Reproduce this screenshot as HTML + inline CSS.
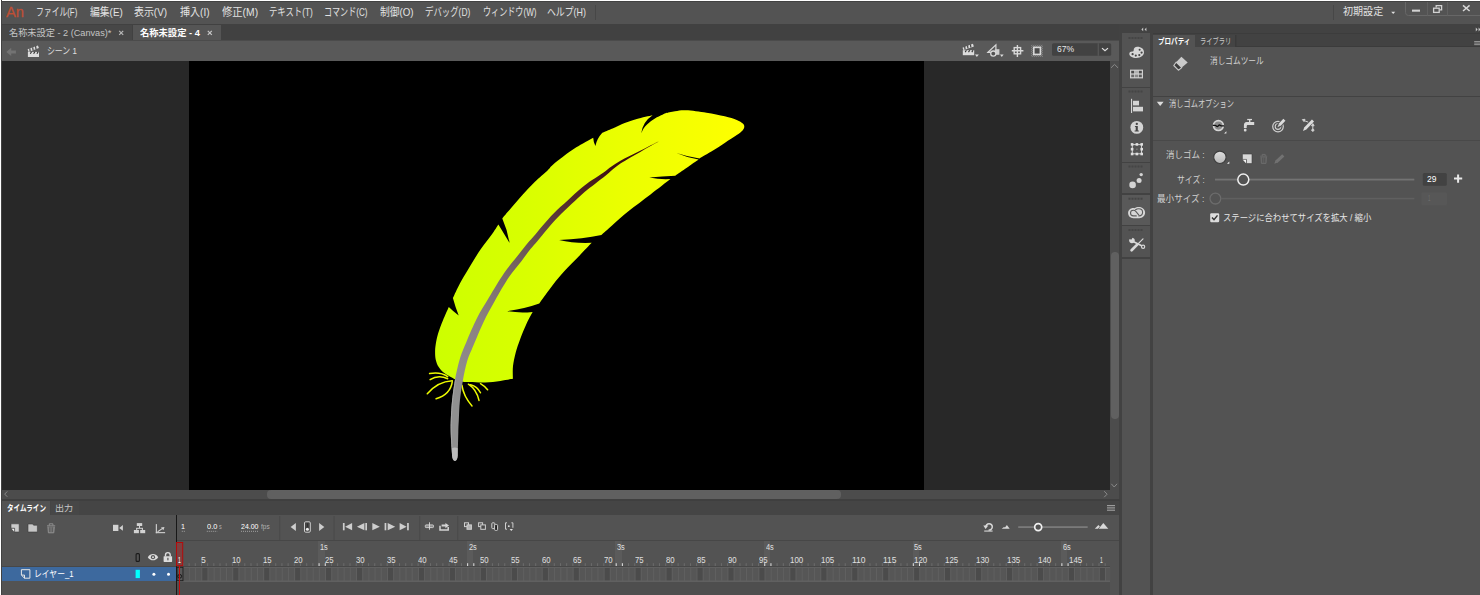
<!DOCTYPE html>
<html lang="ja">
<head>
<meta charset="utf-8">
<title>Adobe Animate</title>
<style>
html,body{margin:0;padding:0;}
body{width:1480px;height:595px;overflow:hidden;background:#535353;position:relative;
 font-family:"Liberation Sans","Noto Sans CJK JP",sans-serif;font-size:10px;color:#dcdcdc;}
.a{position:absolute;}
.t{position:absolute;white-space:pre;line-height:1;transform-origin:0 0;}
#topb{left:0;top:0;width:1480px;height:1px;background:#fff;box-shadow:0 1px 0 #424242;}
#leftb{left:0;top:0;width:1px;height:595px;background:#fff;box-shadow:1px 0 0 #424242;}
/* menu */
#menubar{left:1px;top:1px;width:1479px;height:23px;background:#535353;}
.mi{top:7px;font-size:10.5px;color:#e4e4e4;letter-spacing:-0.3px;}
/* doc tabs */
#tabbar{left:1px;top:24px;width:1119px;height:16px;background:#414141;}
#tab1{left:2px;top:25px;width:130px;height:14.7px;background:#474747;}
#tab2{left:133px;top:25px;width:88px;height:14.7px;background:#555;}
/* scene bar */
#scenebar{left:1px;top:40px;width:1119px;height:21px;background:#595959;border-top:1px solid #4b4b4b;box-sizing:border-box;}
/* stage */
#work{left:1px;top:61px;width:1109px;height:429px;background:#282828;}
#stage{left:189px;top:61px;width:735px;height:429px;background:#000;}
#vscroll{left:1110px;top:61px;width:10px;height:429px;background:#4c4c4c;}
#vthumb{left:1110.7px;top:252.2px;width:8px;height:167.3px;background:#606060;border-radius:4px;}
#hscroll{left:1px;top:490px;width:1119px;height:9px;background:#4c4c4c;}
#hthumb{left:266.9px;top:490.400px;width:573.8px;height:8.200px;background:#606060;border-radius:4.100px;}
/* right dock */
#dockgap{left:1120px;top:24px;width:360px;height:9px;background:#424242;}
#gapL{left:1119px;top:24px;width:3px;height:571px;background:#424242;}
#strip{left:1122px;top:33px;width:28px;height:562px;background:#535353;}
#gapR{left:1150px;top:33px;width:3px;height:562px;background:#424242;}
.sep{left:1122px;width:28px;height:2px;background:#424242;}
#ptabs{left:1153px;top:33px;width:327px;height:14px;background:#424242;border-top:1px solid #3c3c3c;border-bottom:0.800px solid #3b3b3b;box-sizing:border-box;}
#ptab1{left:1153px;top:34.5px;width:41.5px;height:12.5px;background:#535353;}
#ptab2{left:1195px;top:34.5px;width:39.5px;height:12.500px;background:#444;box-shadow:1.500px 0 0 #3a3a3a;}
#prop{left:1153px;top:47px;width:327px;height:548px;background:#535353;}
/* timeline */
#tlgap{left:1px;top:499px;width:1119px;height:2px;background:#3f3f3f;}
#tltabs{left:1px;top:501px;width:1118px;height:14px;background:#454545;}
#tltab1{left:1px;top:501px;width:49px;height:14px;background:#535353;}
#tltab2{left:51px;top:501px;width:28px;height:14px;background:#474747;}
#tl{left:1px;top:515px;width:1118px;height:80px;background:#535353;}
</style>
</head>
<body>
<div class="a" id="menubar"></div>
<div class="a" id="tabbar"></div><div class="a" id="tab1"></div><div class="a" id="tab2"></div>
<div class="a" id="scenebar"></div>
<div class="a" id="work"></div><div class="a" id="stage"></div>
<div class="a" id="vscroll"></div><div class="a" id="vthumb"></div>
<div class="a" id="hscroll"></div><div class="a" id="hthumb"></div>
<div class="a" id="dockgap"></div><div class="a" id="gapL"></div><div class="a" id="strip"></div><div class="a" id="gapR"></div>
<div class="a" id="ptabs"></div><div class="a" id="ptab1"></div><div class="a" id="ptab2"></div><div class="a" id="prop"></div>
<div class="a" id="tlgap"></div><div class="a" id="tltabs"></div><div class="a" id="tltab1"></div><div class="a" id="tltab2"></div><div class="a" id="tl"></div>

<svg class="a" style="left:0;top:0" width="1480" height="595" viewBox="0 0 1480 595">
<defs>
<linearGradient id="fg" gradientUnits="userSpaceOnUse" x1="430" y1="0" x2="745" y2="0"><stop offset="0" stop-color="#ccff00"/><stop offset="0.3" stop-color="#d8ff00"/><stop offset="0.6" stop-color="#eaff00"/><stop offset="1" stop-color="#ffff00"/></linearGradient>
<linearGradient id="rg" gradientUnits="userSpaceOnUse" x1="660" y1="141" x2="455" y2="400"><stop offset="0" stop-color="#380808"/><stop offset="0.15" stop-color="#3e1014"/><stop offset="0.29" stop-color="#4f2626"/><stop offset="0.42" stop-color="#5f4242"/><stop offset="0.5" stop-color="#6b5555"/><stop offset="0.61" stop-color="#7a6a6a"/><stop offset="0.76" stop-color="#8a8080"/><stop offset="0.9" stop-color="#8e8a8a"/><stop offset="1" stop-color="#909090"/></linearGradient>
</defs>
<g fill="none" stroke="#eefc00" stroke-width="1.5" stroke-linecap="round"><path d="M447.7,376.6Q440.2,371.5 429.6,373.6"/><path d="M447.7,378.7Q438.2,374.5 430.1,379.7"/><path d="M452.3,380.7Q437.5,381.5 427.3,393.8"/><path d="M452.3,381.7Q450.5,394.5 436.1,398.8"/><path d="M461.9,385.2Q463.5,396.5 472,405.9"/><path d="M468.4,384.2Q476.5,389.5 479,400.4"/><path d="M470.5,384.7Q477.5,386.5 480.5,392.8"/><path d="M480.5,383.7Q484.5,386 487.6,389.8"/></g>
<path d="M454.8,379.2C453.0,378.2 446.9,375.1 444.2,373.1C441.5,371.1 440.1,369.3 438.7,367.1C437.3,364.9 436.4,362.5 435.8,360.0C435.2,357.5 435.1,354.6 435.1,352.0C435.1,349.4 435.2,347.5 435.7,344.4C436.2,341.3 436.9,337.5 438.1,333.5C439.3,329.5 441.2,324.6 443.0,320.2C444.8,315.8 447.8,309.1 448.8,306.9Q452.5,310.5 458.7,315.6Q455.5,307.5 452.9,297.9C454.1,295.5 457.3,288.2 459.9,283.4C462.5,278.6 465.0,274.5 468.4,268.9C471.8,263.2 476.7,255.2 480.5,249.5C484.3,243.8 488.4,239.2 491.4,235.0C494.4,230.8 497.2,226.2 498.4,224.4Q503.0,232.0 509.6,242.9Q507.5,230.0 502.3,218.4C503.7,216.8 507.1,212.6 510.5,208.7C513.9,204.8 518.6,199.2 522.6,194.8C526.6,190.4 530.5,186.2 534.7,182.1C538.9,178.0 545.1,172.8 548.0,170.0C550.9,167.2 549.4,167.9 552.1,165.5C554.8,163.1 560.2,158.8 564.2,155.8C568.2,152.8 571.5,150.3 576.3,147.3C581.1,144.3 590.4,139.3 593.2,137.7Q593.5,142.5 595.4,145.9Q597.0,138.5 602.3,132.8C604.0,132.1 608.9,130.2 612.6,128.6C616.3,127.0 620.7,124.7 624.7,123.1C628.7,121.5 632.1,120.2 636.8,118.9C641.4,117.6 650.0,115.8 652.6,115.2Q642.6,121.8 641.2,133.5C641.6,132.7 642.6,130.2 643.6,128.6C644.6,127.0 645.3,126.0 647.3,124.2C649.3,122.5 652.7,119.9 655.7,118.1C658.7,116.3 663.9,114.1 665.5,113.3C667.1,113.0 671.6,111.8 675.0,111.3C678.4,110.8 680.8,110.1 686.0,110.3C691.2,110.5 700.0,111.7 706.5,112.7C713.0,113.7 719.7,115.1 724.7,116.3C729.8,117.5 733.8,118.8 736.8,120.0C739.8,121.2 741.5,122.5 742.8,123.6C744.0,124.7 744.3,125.5 744.3,126.6C744.3,127.7 744.0,128.8 742.8,130.2C741.5,131.6 739.8,133.0 736.8,135.1C733.8,137.2 728.7,140.3 724.7,142.9C720.7,145.5 716.8,148.2 712.6,150.8C708.4,153.4 701.7,157.1 699.5,158.4Q687.0,156.6 676.4,153.0Q687.0,157.6 698.6,159.6C696.6,161.0 690.7,165.1 686.8,167.8C682.9,170.5 677.2,174.4 675.3,175.7Q662.0,176.4 649.3,177.5Q660.0,179.6 670.4,179.0C667.1,181.6 657.5,189.1 650.5,194.4C643.5,199.7 635.1,205.9 628.7,211.0C622.3,216.1 616.8,221.2 612.3,225.2C607.8,229.2 603.2,233.3 601.4,234.9Q583.0,238.6 559.0,240.0Q574.0,243.6 591.7,242.8C589.5,245.1 582.9,252.0 578.4,256.7C573.9,261.3 569.0,265.9 564.7,270.7C560.4,275.4 556.8,279.8 552.6,285.2C548.4,290.6 541.5,300.4 539.3,303.4Q526.0,308.2 507.2,311.2Q520.0,313.3 532.6,311.9C531.6,313.9 528.4,319.5 526.4,323.9C524.4,328.3 522.2,333.6 520.4,338.4C518.6,343.2 516.8,348.3 515.6,352.9C514.4,357.5 513.5,361.7 513.0,366.0C512.5,370.3 512.9,376.7 512.9,378.8C510.8,379.1 504.9,380.3 500.3,380.9C495.7,381.5 490.2,382.2 485.1,382.4C480.1,382.6 473.7,382.0 470.0,381.9C466.3,381.8 465.4,382.1 462.9,381.7C460.4,381.2 456.1,379.6 454.8,379.2Z" fill="url(#fg)"/>
<path d="M660.6,140.4C658.8,141.3 653.3,144.0 649.9,145.7C646.4,147.5 643.1,149.2 639.7,150.9C636.4,152.6 633.0,154.2 629.6,156.0C626.2,157.7 622.6,159.5 619.6,161.3C616.5,163.1 613.7,164.9 611.1,166.8C608.4,168.6 606.7,170.3 603.6,172.5C600.4,174.7 595.8,177.6 592.1,180.1C588.4,182.7 585.4,184.7 581.4,188.1C577.3,191.4 572.4,196.0 567.9,200.2C563.3,204.3 558.2,208.8 554.1,213.0C549.9,217.2 546.5,221.2 543.0,225.2C539.5,229.2 535.9,233.8 533.1,237.1C530.2,240.4 528.6,241.9 525.9,245.2C523.1,248.5 520.3,252.4 516.6,257.1C513.0,261.8 508.5,266.5 504.0,273.2C499.4,279.9 493.6,289.8 489.1,297.3C484.6,304.8 480.7,310.8 476.9,318.3C473.1,325.8 469.0,335.7 466.2,342.5C463.3,349.2 461.7,352.7 459.8,358.9C458.0,365.1 456.3,372.6 455.0,379.5C453.7,386.3 452.8,393.3 452.1,400.0C451.4,406.7 451.0,414.5 450.8,419.8C450.6,425.1 450.6,427.3 450.7,432.0C450.8,436.6 451.3,443.9 451.5,447.8C451.7,451.6 452.0,453.9 452.1,455.1C452.1,463.1 457.7,462.9 457.7,454.9C457.7,453.7 457.8,451.5 457.9,447.6C458.0,443.8 458.2,436.6 458.3,432.0C458.4,427.4 458.5,425.4 458.8,420.2C459.1,415.0 459.2,407.3 459.9,400.8C460.5,394.3 461.6,387.5 462.8,380.9C464.0,374.3 465.4,367.0 467.2,361.1C469.0,355.2 470.7,352.1 473.4,345.5C476.2,339.0 480.1,329.2 483.7,321.7C487.3,314.2 490.6,308.2 494.9,300.7C499.1,293.2 504.8,283.4 509.2,276.8C513.7,270.2 518.0,265.5 521.6,260.9C525.1,256.3 527.9,252.3 530.5,249.0C533.2,245.7 534.7,244.2 537.5,240.9C540.4,237.6 544.0,233.0 547.4,229.0C550.8,225.0 554.1,221.2 558.1,217.0C562.2,212.8 567.1,208.2 571.5,204.0C575.9,199.9 580.8,195.3 584.6,191.9C588.5,188.6 591.3,186.6 594.9,183.9C598.4,181.1 602.8,178.0 605.8,175.5C608.9,173.1 610.4,171.3 612.9,169.2C615.4,167.2 617.9,165.3 620.8,163.3C623.8,161.4 627.2,159.3 630.4,157.4C633.6,155.5 637.0,153.7 640.3,151.9C643.5,150.0 646.7,148.1 650.1,146.3C653.5,144.4 658.9,141.5 660.6,140.6Z" fill="url(#rg)"/>
<path d="M455.5,379.6C455.0,383.0 453.3,393.3 452.6,400.1C451.9,406.8 451.5,414.5 451.3,419.8C451.1,425.2 451.1,427.3 451.2,432.0C451.3,436.6 451.8,443.9 452.0,447.7C452.2,451.6 452.5,453.8 452.6,455.1" fill="none" stroke="#a8a8a8" stroke-width="0.9"/>
<path d="M452,448.3 c1.5,-1 4,-1 5.7,0 v7 c-0.3,7.6 -5.2,7.6 -5.7,0z" fill="#bcbcbc"/>
</svg>
<div class="a" style="left:1122.00px;top:194.60px;width:28.00px;height:30.20px;background:#595959;"></div>
<div class="a" style="left:1122.00px;top:86.80px;width:28.00px;height:1.30px;background:#424242;"></div>
<div class="a" style="left:1122.00px;top:161.50px;width:28.00px;height:1.50px;background:#424242;"></div>
<div class="a" style="left:1122.00px;top:192.60px;width:28.00px;height:2.00px;background:#424242;"></div>
<div class="a" style="left:1122.00px;top:224.80px;width:28.00px;height:1.70px;background:#424242;"></div>
<div class="a" style="left:1122.00px;top:257.40px;width:28.00px;height:1.60px;background:#424242;"></div>
<div class="a" style="left:1153.00px;top:95.50px;width:327.00px;height:1.50px;background:#424242;"></div>
<div class="a" style="left:1153.00px;top:139.60px;width:327.00px;height:1.00px;background:#494949;"></div>
<div class="a" style="left:177.00px;top:540.00px;width:942.00px;height:1.00px;background:#474747;"></div>
<div class="a" style="left:1.00px;top:566.00px;width:1109.00px;height:1.00px;background:#474747;"></div>
<div class="a" style="left:318.37px;top:541.00px;width:6.19px;height:25.00px;background:#5b5b5b;"></div>
<div class="a" style="left:466.93px;top:541.00px;width:6.19px;height:25.00px;background:#5b5b5b;"></div>
<div class="a" style="left:615.49px;top:541.00px;width:6.19px;height:25.00px;background:#5b5b5b;"></div>
<div class="a" style="left:764.05px;top:541.00px;width:6.19px;height:25.00px;background:#5b5b5b;"></div>
<div class="a" style="left:912.61px;top:541.00px;width:6.19px;height:25.00px;background:#5b5b5b;"></div>
<div class="a" style="left:1061.17px;top:541.00px;width:6.19px;height:25.00px;background:#5b5b5b;"></div>
<svg class="a" style="left:0;top:0" width="1480" height="595" viewBox="0 0 1480 595"><rect x="177" y="582" width="933" height="13" fill="#4e4e4e"/><rect x="177" y="567" width="933" height="15" fill="#606060"/><rect x="177.50" y="568" width="5.19" height="12.400" fill="#565656"/><rect x="183.69" y="568" width="5.19" height="12.400" fill="#565656"/><rect x="189.88" y="568" width="5.19" height="12.400" fill="#565656"/><rect x="196.07" y="568" width="5.19" height="12.400" fill="#565656"/><rect x="202.26" y="568" width="5.19" height="12.400" fill="#4b4b4b"/><rect x="208.45" y="568" width="5.19" height="12.400" fill="#565656"/><rect x="214.64" y="568" width="5.19" height="12.400" fill="#565656"/><rect x="220.83" y="568" width="5.19" height="12.400" fill="#565656"/><rect x="227.02" y="568" width="5.19" height="12.400" fill="#565656"/><rect x="233.21" y="568" width="5.19" height="12.400" fill="#4b4b4b"/><rect x="239.40" y="568" width="5.19" height="12.400" fill="#565656"/><rect x="245.59" y="568" width="5.19" height="12.400" fill="#565656"/><rect x="251.78" y="568" width="5.19" height="12.400" fill="#565656"/><rect x="257.97" y="568" width="5.19" height="12.400" fill="#565656"/><rect x="264.16" y="568" width="5.19" height="12.400" fill="#4b4b4b"/><rect x="270.35" y="568" width="5.19" height="12.400" fill="#565656"/><rect x="276.54" y="568" width="5.19" height="12.400" fill="#565656"/><rect x="282.73" y="568" width="5.19" height="12.400" fill="#565656"/><rect x="288.92" y="568" width="5.19" height="12.400" fill="#565656"/><rect x="295.11" y="568" width="5.19" height="12.400" fill="#4b4b4b"/><rect x="301.30" y="568" width="5.19" height="12.400" fill="#565656"/><rect x="307.49" y="568" width="5.19" height="12.400" fill="#565656"/><rect x="313.68" y="568" width="5.19" height="12.400" fill="#565656"/><rect x="319.87" y="568" width="5.19" height="12.400" fill="#565656"/><rect x="326.06" y="568" width="5.19" height="12.400" fill="#4b4b4b"/><rect x="332.25" y="568" width="5.19" height="12.400" fill="#565656"/><rect x="338.44" y="568" width="5.19" height="12.400" fill="#565656"/><rect x="344.63" y="568" width="5.19" height="12.400" fill="#565656"/><rect x="350.82" y="568" width="5.19" height="12.400" fill="#565656"/><rect x="357.01" y="568" width="5.19" height="12.400" fill="#4b4b4b"/><rect x="363.20" y="568" width="5.19" height="12.400" fill="#565656"/><rect x="369.39" y="568" width="5.19" height="12.400" fill="#565656"/><rect x="375.58" y="568" width="5.19" height="12.400" fill="#565656"/><rect x="381.77" y="568" width="5.19" height="12.400" fill="#565656"/><rect x="387.96" y="568" width="5.19" height="12.400" fill="#4b4b4b"/><rect x="394.15" y="568" width="5.19" height="12.400" fill="#565656"/><rect x="400.34" y="568" width="5.19" height="12.400" fill="#565656"/><rect x="406.53" y="568" width="5.19" height="12.400" fill="#565656"/><rect x="412.72" y="568" width="5.19" height="12.400" fill="#565656"/><rect x="418.91" y="568" width="5.19" height="12.400" fill="#4b4b4b"/><rect x="425.10" y="568" width="5.19" height="12.400" fill="#565656"/><rect x="431.29" y="568" width="5.19" height="12.400" fill="#565656"/><rect x="437.48" y="568" width="5.19" height="12.400" fill="#565656"/><rect x="443.67" y="568" width="5.19" height="12.400" fill="#565656"/><rect x="449.86" y="568" width="5.19" height="12.400" fill="#4b4b4b"/><rect x="456.05" y="568" width="5.19" height="12.400" fill="#565656"/><rect x="462.24" y="568" width="5.19" height="12.400" fill="#565656"/><rect x="468.43" y="568" width="5.19" height="12.400" fill="#565656"/><rect x="474.62" y="568" width="5.19" height="12.400" fill="#565656"/><rect x="480.81" y="568" width="5.19" height="12.400" fill="#4b4b4b"/><rect x="487.00" y="568" width="5.19" height="12.400" fill="#565656"/><rect x="493.19" y="568" width="5.19" height="12.400" fill="#565656"/><rect x="499.38" y="568" width="5.19" height="12.400" fill="#565656"/><rect x="505.57" y="568" width="5.19" height="12.400" fill="#565656"/><rect x="511.76" y="568" width="5.19" height="12.400" fill="#4b4b4b"/><rect x="517.95" y="568" width="5.19" height="12.400" fill="#565656"/><rect x="524.14" y="568" width="5.19" height="12.400" fill="#565656"/><rect x="530.33" y="568" width="5.19" height="12.400" fill="#565656"/><rect x="536.52" y="568" width="5.19" height="12.400" fill="#565656"/><rect x="542.71" y="568" width="5.19" height="12.400" fill="#4b4b4b"/><rect x="548.90" y="568" width="5.19" height="12.400" fill="#565656"/><rect x="555.09" y="568" width="5.19" height="12.400" fill="#565656"/><rect x="561.28" y="568" width="5.19" height="12.400" fill="#565656"/><rect x="567.47" y="568" width="5.19" height="12.400" fill="#565656"/><rect x="573.66" y="568" width="5.19" height="12.400" fill="#4b4b4b"/><rect x="579.85" y="568" width="5.19" height="12.400" fill="#565656"/><rect x="586.04" y="568" width="5.19" height="12.400" fill="#565656"/><rect x="592.23" y="568" width="5.19" height="12.400" fill="#565656"/><rect x="598.42" y="568" width="5.19" height="12.400" fill="#565656"/><rect x="604.61" y="568" width="5.19" height="12.400" fill="#4b4b4b"/><rect x="610.80" y="568" width="5.19" height="12.400" fill="#565656"/><rect x="616.99" y="568" width="5.19" height="12.400" fill="#565656"/><rect x="623.18" y="568" width="5.19" height="12.400" fill="#565656"/><rect x="629.37" y="568" width="5.19" height="12.400" fill="#565656"/><rect x="635.56" y="568" width="5.19" height="12.400" fill="#4b4b4b"/><rect x="641.75" y="568" width="5.19" height="12.400" fill="#565656"/><rect x="647.94" y="568" width="5.19" height="12.400" fill="#565656"/><rect x="654.13" y="568" width="5.19" height="12.400" fill="#565656"/><rect x="660.32" y="568" width="5.19" height="12.400" fill="#565656"/><rect x="666.51" y="568" width="5.19" height="12.400" fill="#4b4b4b"/><rect x="672.70" y="568" width="5.19" height="12.400" fill="#565656"/><rect x="678.89" y="568" width="5.19" height="12.400" fill="#565656"/><rect x="685.08" y="568" width="5.19" height="12.400" fill="#565656"/><rect x="691.27" y="568" width="5.19" height="12.400" fill="#565656"/><rect x="697.46" y="568" width="5.19" height="12.400" fill="#4b4b4b"/><rect x="703.65" y="568" width="5.19" height="12.400" fill="#565656"/><rect x="709.84" y="568" width="5.19" height="12.400" fill="#565656"/><rect x="716.03" y="568" width="5.19" height="12.400" fill="#565656"/><rect x="722.22" y="568" width="5.19" height="12.400" fill="#565656"/><rect x="728.41" y="568" width="5.19" height="12.400" fill="#4b4b4b"/><rect x="734.60" y="568" width="5.19" height="12.400" fill="#565656"/><rect x="740.79" y="568" width="5.19" height="12.400" fill="#565656"/><rect x="746.98" y="568" width="5.19" height="12.400" fill="#565656"/><rect x="753.17" y="568" width="5.19" height="12.400" fill="#565656"/><rect x="759.36" y="568" width="5.19" height="12.400" fill="#4b4b4b"/><rect x="765.55" y="568" width="5.19" height="12.400" fill="#565656"/><rect x="771.74" y="568" width="5.19" height="12.400" fill="#565656"/><rect x="777.93" y="568" width="5.19" height="12.400" fill="#565656"/><rect x="784.12" y="568" width="5.19" height="12.400" fill="#565656"/><rect x="790.31" y="568" width="5.19" height="12.400" fill="#4b4b4b"/><rect x="796.50" y="568" width="5.19" height="12.400" fill="#565656"/><rect x="802.69" y="568" width="5.19" height="12.400" fill="#565656"/><rect x="808.88" y="568" width="5.19" height="12.400" fill="#565656"/><rect x="815.07" y="568" width="5.19" height="12.400" fill="#565656"/><rect x="821.26" y="568" width="5.19" height="12.400" fill="#4b4b4b"/><rect x="827.45" y="568" width="5.19" height="12.400" fill="#565656"/><rect x="833.64" y="568" width="5.19" height="12.400" fill="#565656"/><rect x="839.83" y="568" width="5.19" height="12.400" fill="#565656"/><rect x="846.02" y="568" width="5.19" height="12.400" fill="#565656"/><rect x="852.21" y="568" width="5.19" height="12.400" fill="#4b4b4b"/><rect x="858.40" y="568" width="5.19" height="12.400" fill="#565656"/><rect x="864.59" y="568" width="5.19" height="12.400" fill="#565656"/><rect x="870.78" y="568" width="5.19" height="12.400" fill="#565656"/><rect x="876.97" y="568" width="5.19" height="12.400" fill="#565656"/><rect x="883.16" y="568" width="5.19" height="12.400" fill="#4b4b4b"/><rect x="889.35" y="568" width="5.19" height="12.400" fill="#565656"/><rect x="895.54" y="568" width="5.19" height="12.400" fill="#565656"/><rect x="901.73" y="568" width="5.19" height="12.400" fill="#565656"/><rect x="907.92" y="568" width="5.19" height="12.400" fill="#565656"/><rect x="914.11" y="568" width="5.19" height="12.400" fill="#4b4b4b"/><rect x="920.30" y="568" width="5.19" height="12.400" fill="#565656"/><rect x="926.49" y="568" width="5.19" height="12.400" fill="#565656"/><rect x="932.68" y="568" width="5.19" height="12.400" fill="#565656"/><rect x="938.87" y="568" width="5.19" height="12.400" fill="#565656"/><rect x="945.06" y="568" width="5.19" height="12.400" fill="#4b4b4b"/><rect x="951.25" y="568" width="5.19" height="12.400" fill="#565656"/><rect x="957.44" y="568" width="5.19" height="12.400" fill="#565656"/><rect x="963.63" y="568" width="5.19" height="12.400" fill="#565656"/><rect x="969.82" y="568" width="5.19" height="12.400" fill="#565656"/><rect x="976.01" y="568" width="5.19" height="12.400" fill="#4b4b4b"/><rect x="982.20" y="568" width="5.19" height="12.400" fill="#565656"/><rect x="988.39" y="568" width="5.19" height="12.400" fill="#565656"/><rect x="994.58" y="568" width="5.19" height="12.400" fill="#565656"/><rect x="1000.77" y="568" width="5.19" height="12.400" fill="#565656"/><rect x="1006.96" y="568" width="5.19" height="12.400" fill="#4b4b4b"/><rect x="1013.15" y="568" width="5.19" height="12.400" fill="#565656"/><rect x="1019.34" y="568" width="5.19" height="12.400" fill="#565656"/><rect x="1025.53" y="568" width="5.19" height="12.400" fill="#565656"/><rect x="1031.72" y="568" width="5.19" height="12.400" fill="#565656"/><rect x="1037.91" y="568" width="5.19" height="12.400" fill="#4b4b4b"/><rect x="1044.10" y="568" width="5.19" height="12.400" fill="#565656"/><rect x="1050.29" y="568" width="5.19" height="12.400" fill="#565656"/><rect x="1056.48" y="568" width="5.19" height="12.400" fill="#565656"/><rect x="1062.67" y="568" width="5.19" height="12.400" fill="#565656"/><rect x="1068.86" y="568" width="5.19" height="12.400" fill="#4b4b4b"/><rect x="1075.05" y="568" width="5.19" height="12.400" fill="#565656"/><rect x="1081.24" y="568" width="5.19" height="12.400" fill="#565656"/><rect x="1087.43" y="568" width="5.19" height="12.400" fill="#565656"/><rect x="1093.62" y="568" width="5.19" height="12.400" fill="#565656"/><rect x="1099.81" y="568" width="5.19" height="12.400" fill="#4b4b4b"/><rect x="1106.00" y="568" width="4.50" height="12.400" fill="#565656"/><rect x="182.39" y="563.2" width="1" height="2.8" fill="#6c6c6c"/><rect x="188.58" y="563.2" width="1" height="2.8" fill="#6c6c6c"/><rect x="194.77" y="563.2" width="1" height="2.8" fill="#6c6c6c"/><rect x="200.96" y="563.2" width="1" height="2.8" fill="#6c6c6c"/><rect x="207.15" y="563.2" width="1" height="2.8" fill="#6c6c6c"/><rect x="213.34" y="563.2" width="1" height="2.8" fill="#6c6c6c"/><rect x="219.53" y="563.2" width="1" height="2.8" fill="#6c6c6c"/><rect x="225.72" y="563.2" width="1" height="2.8" fill="#6c6c6c"/><rect x="231.91" y="563.2" width="1" height="2.8" fill="#6c6c6c"/><rect x="238.10" y="563.2" width="1" height="2.8" fill="#6c6c6c"/><rect x="244.29" y="563.2" width="1" height="2.8" fill="#6c6c6c"/><rect x="250.48" y="563.2" width="1" height="2.8" fill="#6c6c6c"/><rect x="256.67" y="563.2" width="1" height="2.8" fill="#6c6c6c"/><rect x="262.86" y="563.2" width="1" height="2.8" fill="#6c6c6c"/><rect x="269.05" y="563.2" width="1" height="2.8" fill="#6c6c6c"/><rect x="275.24" y="563.2" width="1" height="2.8" fill="#6c6c6c"/><rect x="281.43" y="563.2" width="1" height="2.8" fill="#6c6c6c"/><rect x="287.62" y="563.2" width="1" height="2.8" fill="#6c6c6c"/><rect x="293.81" y="563.2" width="1" height="2.8" fill="#6c6c6c"/><rect x="300.00" y="563.2" width="1" height="2.8" fill="#6c6c6c"/><rect x="306.19" y="563.2" width="1" height="2.8" fill="#6c6c6c"/><rect x="312.38" y="563.2" width="1" height="2.8" fill="#6c6c6c"/><rect x="318.57" y="563.2" width="1" height="2.8" fill="#e4e4e4"/><rect x="324.76" y="563.2" width="1" height="2.8" fill="#e4e4e4"/><rect x="330.95" y="563.2" width="1" height="2.8" fill="#6c6c6c"/><rect x="337.14" y="563.2" width="1" height="2.8" fill="#6c6c6c"/><rect x="343.33" y="563.2" width="1" height="2.8" fill="#6c6c6c"/><rect x="349.52" y="563.2" width="1" height="2.8" fill="#6c6c6c"/><rect x="355.71" y="563.2" width="1" height="2.8" fill="#6c6c6c"/><rect x="361.90" y="563.2" width="1" height="2.8" fill="#6c6c6c"/><rect x="368.09" y="563.2" width="1" height="2.8" fill="#6c6c6c"/><rect x="374.28" y="563.2" width="1" height="2.8" fill="#6c6c6c"/><rect x="380.47" y="563.2" width="1" height="2.8" fill="#6c6c6c"/><rect x="386.66" y="563.2" width="1" height="2.8" fill="#6c6c6c"/><rect x="392.85" y="563.2" width="1" height="2.8" fill="#6c6c6c"/><rect x="399.04" y="563.2" width="1" height="2.8" fill="#6c6c6c"/><rect x="405.23" y="563.2" width="1" height="2.8" fill="#6c6c6c"/><rect x="411.42" y="563.2" width="1" height="2.8" fill="#6c6c6c"/><rect x="417.61" y="563.2" width="1" height="2.8" fill="#6c6c6c"/><rect x="423.80" y="563.2" width="1" height="2.8" fill="#6c6c6c"/><rect x="429.99" y="563.2" width="1" height="2.8" fill="#6c6c6c"/><rect x="436.18" y="563.2" width="1" height="2.8" fill="#6c6c6c"/><rect x="442.37" y="563.2" width="1" height="2.8" fill="#6c6c6c"/><rect x="448.56" y="563.2" width="1" height="2.8" fill="#6c6c6c"/><rect x="454.75" y="563.2" width="1" height="2.8" fill="#6c6c6c"/><rect x="460.94" y="563.2" width="1" height="2.8" fill="#6c6c6c"/><rect x="467.13" y="563.2" width="1" height="2.8" fill="#e4e4e4"/><rect x="473.32" y="563.2" width="1" height="2.8" fill="#e4e4e4"/><rect x="479.51" y="563.2" width="1" height="2.8" fill="#6c6c6c"/><rect x="485.70" y="563.2" width="1" height="2.8" fill="#6c6c6c"/><rect x="491.89" y="563.2" width="1" height="2.8" fill="#6c6c6c"/><rect x="498.08" y="563.2" width="1" height="2.8" fill="#6c6c6c"/><rect x="504.27" y="563.2" width="1" height="2.8" fill="#6c6c6c"/><rect x="510.46" y="563.2" width="1" height="2.8" fill="#6c6c6c"/><rect x="516.65" y="563.2" width="1" height="2.8" fill="#6c6c6c"/><rect x="522.84" y="563.2" width="1" height="2.8" fill="#6c6c6c"/><rect x="529.03" y="563.2" width="1" height="2.8" fill="#6c6c6c"/><rect x="535.22" y="563.2" width="1" height="2.8" fill="#6c6c6c"/><rect x="541.41" y="563.2" width="1" height="2.8" fill="#6c6c6c"/><rect x="547.60" y="563.2" width="1" height="2.8" fill="#6c6c6c"/><rect x="553.79" y="563.2" width="1" height="2.8" fill="#6c6c6c"/><rect x="559.98" y="563.2" width="1" height="2.8" fill="#6c6c6c"/><rect x="566.17" y="563.2" width="1" height="2.8" fill="#6c6c6c"/><rect x="572.36" y="563.2" width="1" height="2.8" fill="#6c6c6c"/><rect x="578.55" y="563.2" width="1" height="2.8" fill="#6c6c6c"/><rect x="584.74" y="563.2" width="1" height="2.8" fill="#6c6c6c"/><rect x="590.93" y="563.2" width="1" height="2.8" fill="#6c6c6c"/><rect x="597.12" y="563.2" width="1" height="2.8" fill="#6c6c6c"/><rect x="603.31" y="563.2" width="1" height="2.8" fill="#6c6c6c"/><rect x="609.50" y="563.2" width="1" height="2.8" fill="#6c6c6c"/><rect x="615.69" y="563.2" width="1" height="2.8" fill="#e4e4e4"/><rect x="621.88" y="563.2" width="1" height="2.8" fill="#e4e4e4"/><rect x="628.07" y="563.2" width="1" height="2.8" fill="#6c6c6c"/><rect x="634.26" y="563.2" width="1" height="2.8" fill="#6c6c6c"/><rect x="640.45" y="563.2" width="1" height="2.8" fill="#6c6c6c"/><rect x="646.64" y="563.2" width="1" height="2.8" fill="#6c6c6c"/><rect x="652.83" y="563.2" width="1" height="2.8" fill="#6c6c6c"/><rect x="659.02" y="563.2" width="1" height="2.8" fill="#6c6c6c"/><rect x="665.21" y="563.2" width="1" height="2.8" fill="#6c6c6c"/><rect x="671.40" y="563.2" width="1" height="2.8" fill="#6c6c6c"/><rect x="677.59" y="563.2" width="1" height="2.8" fill="#6c6c6c"/><rect x="683.78" y="563.2" width="1" height="2.8" fill="#6c6c6c"/><rect x="689.97" y="563.2" width="1" height="2.8" fill="#6c6c6c"/><rect x="696.16" y="563.2" width="1" height="2.8" fill="#6c6c6c"/><rect x="702.35" y="563.2" width="1" height="2.8" fill="#6c6c6c"/><rect x="708.54" y="563.2" width="1" height="2.8" fill="#6c6c6c"/><rect x="714.73" y="563.2" width="1" height="2.8" fill="#6c6c6c"/><rect x="720.92" y="563.2" width="1" height="2.8" fill="#6c6c6c"/><rect x="727.11" y="563.2" width="1" height="2.8" fill="#6c6c6c"/><rect x="733.30" y="563.2" width="1" height="2.8" fill="#6c6c6c"/><rect x="739.49" y="563.2" width="1" height="2.8" fill="#6c6c6c"/><rect x="745.68" y="563.2" width="1" height="2.8" fill="#6c6c6c"/><rect x="751.87" y="563.2" width="1" height="2.8" fill="#6c6c6c"/><rect x="758.06" y="563.2" width="1" height="2.8" fill="#6c6c6c"/><rect x="764.25" y="563.2" width="1" height="2.8" fill="#e4e4e4"/><rect x="770.44" y="563.2" width="1" height="2.8" fill="#e4e4e4"/><rect x="776.63" y="563.2" width="1" height="2.8" fill="#6c6c6c"/><rect x="782.82" y="563.2" width="1" height="2.8" fill="#6c6c6c"/><rect x="789.01" y="563.2" width="1" height="2.8" fill="#6c6c6c"/><rect x="795.20" y="563.2" width="1" height="2.8" fill="#6c6c6c"/><rect x="801.39" y="563.2" width="1" height="2.8" fill="#6c6c6c"/><rect x="807.58" y="563.2" width="1" height="2.8" fill="#6c6c6c"/><rect x="813.77" y="563.2" width="1" height="2.8" fill="#6c6c6c"/><rect x="819.96" y="563.2" width="1" height="2.8" fill="#6c6c6c"/><rect x="826.15" y="563.2" width="1" height="2.8" fill="#6c6c6c"/><rect x="832.34" y="563.2" width="1" height="2.8" fill="#6c6c6c"/><rect x="838.53" y="563.2" width="1" height="2.8" fill="#6c6c6c"/><rect x="844.72" y="563.2" width="1" height="2.8" fill="#6c6c6c"/><rect x="850.91" y="563.2" width="1" height="2.8" fill="#6c6c6c"/><rect x="857.10" y="563.2" width="1" height="2.8" fill="#6c6c6c"/><rect x="863.29" y="563.2" width="1" height="2.8" fill="#6c6c6c"/><rect x="869.48" y="563.2" width="1" height="2.8" fill="#6c6c6c"/><rect x="875.67" y="563.2" width="1" height="2.8" fill="#6c6c6c"/><rect x="881.86" y="563.2" width="1" height="2.8" fill="#6c6c6c"/><rect x="888.05" y="563.2" width="1" height="2.8" fill="#6c6c6c"/><rect x="894.24" y="563.2" width="1" height="2.8" fill="#6c6c6c"/><rect x="900.43" y="563.2" width="1" height="2.8" fill="#6c6c6c"/><rect x="906.62" y="563.2" width="1" height="2.8" fill="#6c6c6c"/><rect x="912.81" y="563.2" width="1" height="2.8" fill="#e4e4e4"/><rect x="919.00" y="563.2" width="1" height="2.8" fill="#e4e4e4"/><rect x="925.19" y="563.2" width="1" height="2.8" fill="#6c6c6c"/><rect x="931.38" y="563.2" width="1" height="2.8" fill="#6c6c6c"/><rect x="937.57" y="563.2" width="1" height="2.8" fill="#6c6c6c"/><rect x="943.76" y="563.2" width="1" height="2.8" fill="#6c6c6c"/><rect x="949.95" y="563.2" width="1" height="2.8" fill="#6c6c6c"/><rect x="956.14" y="563.2" width="1" height="2.8" fill="#6c6c6c"/><rect x="962.33" y="563.2" width="1" height="2.8" fill="#6c6c6c"/><rect x="968.52" y="563.2" width="1" height="2.8" fill="#6c6c6c"/><rect x="974.71" y="563.2" width="1" height="2.8" fill="#6c6c6c"/><rect x="980.90" y="563.2" width="1" height="2.8" fill="#6c6c6c"/><rect x="987.09" y="563.2" width="1" height="2.8" fill="#6c6c6c"/><rect x="993.28" y="563.2" width="1" height="2.8" fill="#6c6c6c"/><rect x="999.47" y="563.2" width="1" height="2.8" fill="#6c6c6c"/><rect x="1005.66" y="563.2" width="1" height="2.8" fill="#6c6c6c"/><rect x="1011.85" y="563.2" width="1" height="2.8" fill="#6c6c6c"/><rect x="1018.04" y="563.2" width="1" height="2.8" fill="#6c6c6c"/><rect x="1024.23" y="563.2" width="1" height="2.8" fill="#6c6c6c"/><rect x="1030.42" y="563.2" width="1" height="2.8" fill="#6c6c6c"/><rect x="1036.61" y="563.2" width="1" height="2.8" fill="#6c6c6c"/><rect x="1042.80" y="563.2" width="1" height="2.8" fill="#6c6c6c"/><rect x="1048.99" y="563.2" width="1" height="2.8" fill="#6c6c6c"/><rect x="1055.18" y="563.2" width="1" height="2.8" fill="#6c6c6c"/><rect x="1061.37" y="563.2" width="1" height="2.8" fill="#e4e4e4"/><rect x="1067.56" y="563.2" width="1" height="2.8" fill="#e4e4e4"/><rect x="1073.75" y="563.2" width="1" height="2.8" fill="#6c6c6c"/><rect x="1079.94" y="563.2" width="1" height="2.8" fill="#6c6c6c"/><rect x="1086.13" y="563.2" width="1" height="2.8" fill="#6c6c6c"/><rect x="1092.32" y="563.2" width="1" height="2.8" fill="#6c6c6c"/><rect x="1098.51" y="563.2" width="1" height="2.8" fill="#6c6c6c"/><rect x="1104.70" y="563.2" width="1" height="2.8" fill="#6c6c6c"/><rect x="176" y="515" width="1" height="80" fill="#181818"/><rect x="177" y="567.3" width="6" height="13.400" fill="#585858" stroke="#1c1c1c" stroke-width="0.900"/><circle cx="179.700" cy="576.300" r="1.900" fill="none" stroke="#111" stroke-width="0.900"/><rect x="176.500" y="542.500" width="6.200" height="23.200" fill="#7b4141" stroke="#b40a0a" stroke-width="1"/><rect x="179" y="566" width="1" height="29" fill="#c80a0a"/></svg>
<div class="a" style="left:2.00px;top:567.00px;width:174.00px;height:13.60px;background:#3d699e;"></div>
<svg class="a" style="left:0;top:0" width="1480" height="595" viewBox="0 0 1480 595">
<defs>
<linearGradient id="bg1" x1="0" y1="0" x2="0" y2="1"><stop offset="0" stop-color="#dedede"/><stop offset="1" stop-color="#b8b8b8"/></linearGradient>
<pattern id="chk" width="2" height="2" patternUnits="userSpaceOnUse"><rect width="2" height="2" fill="#606060"/><rect width="1" height="1" fill="#7c7c7c"/><rect x="1" y="1" width="1" height="1" fill="#7c7c7c"/></pattern>
</defs>
<!-- menubar separators -->
<rect x="595" y="5" width="1" height="15" fill="#474747"/>
<rect x="1333" y="5" width="1" height="15" fill="#474747"/>
<path d="M1391.2,11.8h4l-2,2.2z" fill="#e0e0e0"/>
<!-- window buttons -->
<path d="M1405.5,1v11.5q0,3 3,3h72" fill="none" stroke="#676767" stroke-width="1"/>
<path d="M1427.5,1v14.5M1447.5,1v14.5" stroke="#606060" stroke-width="1"/>
<rect x="1412" y="9.6" width="8" height="2.1" fill="#d2d2d2"/>
<g fill="none" stroke="#d2d2d2" stroke-width="1.3"><path d="M1436.2,7.6v-1.9h5.4v4.2h-1.9"/><rect x="1433.6" y="8.2" width="5.6" height="4.2"/></g>
<path d="M1463,5.4l6.6,5.6M1469.6,5.4l-6.6,5.6" stroke="#d8d8d8" stroke-width="1.5"/>
<!-- doc tab close x -->
<path d="M119.2,30.8l4,4M123.2,30.8l-4,4" stroke="#b8b8b8" stroke-width="1.2"/>
<path d="M207.8,30.8l4,4M211.8,30.8l-4,4" stroke="#c8c8c8" stroke-width="1.2"/>
<!-- scene bar: back arrow -->
<path d="M6.3,51.9l4.9,-4.1v2.7h4.7v2.9h-4.7v2.6z" fill="#737373"/>
<!-- clapper small -->
<g fill="#dcdcdc">
<rect x="27.9" y="51.9" width="11.1" height="5.1"/>
<path d="M27.6,49.3l10.3,-3.9l1,2.6l-10.3,3.9z"/>
</g>
<g stroke="#333" stroke-width="1.1"><path d="M30.2,51.3l-0.4,-2.9M33.1,50.2l-0.4,-2.9M36,49.1l-0.4,-2.9"/><path d="M30.3,53.8l1.2,-1.9M33.6,53.8l1.2,-1.9M36.9,53.8l1.2,-1.9"/></g>
<!-- scene bar right: clapper with arrow -->
<g fill="#dcdcdc">
<rect x="962.8" y="50.2" width="11.4" height="5"/>
<path d="M962.5,47.7l10.4,-3.9l1,2.6l-10.4,3.9z"/>
<path d="M975,54.6h3.8l-1.9,2.4z"/>
</g>
<g stroke="#333" stroke-width="1.1"><path d="M965.1,49.6l-0.4,-2.9M968,48.5l-0.4,-2.9M970.9,47.4l-0.4,-2.9"/><path d="M965.2,52.1l1.2,-1.9M968.5,52.1l1.2,-1.9M971.8,52.1l1.2,-1.9"/></g>
<!-- symbol icon -->
<g fill="none" stroke="#d8d8d8" stroke-width="1.2"><path d="M988,52.3l7.9,-7.5v7.5z"/></g>
<rect x="994.8" y="49.2" width="4.6" height="5.6" fill="#cfcfcf"/>
<circle cx="993.3" cy="53.6" r="2.6" fill="#535353" stroke="#d8d8d8" stroke-width="1.3"/>
<path d="M1000,54.6h3.6l-1.8,2.4z" fill="#dcdcdc"/>
<!-- crosshair -->
<g fill="none" stroke="#d8d8d8" stroke-width="1.4"><rect x="1014.2" y="47.6" width="6.4" height="6.2"/><path d="M1017.4,45v12M1011.8,50.7h11.6"/></g>
<!-- clip square -->
<rect x="1031" y="44.8" width="12" height="12.2" fill="url(#chk)"/>
<rect x="1033.8" y="47.4" width="6.600" height="7" fill="#4c4c4c" stroke="#d8d8d8" stroke-width="1.6"/>
<!-- zoom box -->
<rect x="1052" y="43.2" width="59.2" height="12.6" rx="1.5" fill="#424242"/>
<rect x="1097.6" y="43.2" width="1.4" height="12.6" fill="#555"/>
<path d="M1102,48.1l3,2.7l3,-2.7" fill="none" stroke="#e0e0e0" stroke-width="1.2"/>
<!-- scroll arrows -->
<path d="M1111,67.8l3.5,-3.4l3.5,3.4" fill="none" stroke="#8a8a8a" stroke-width="1"/>
<path d="M1111.3,483.8l2.9,3.2l2.9,-3.2" fill="none" stroke="#8a8a8a" stroke-width="1"/>
<path d="M7.3,491.4l-2.6,2.7l2.6,2.7" fill="none" stroke="#8a8a8a" stroke-width="1"/>
<path d="M1104.2,491.2l2.9,3l-2.9,3" fill="none" stroke="#8a8a8a" stroke-width="1"/>
<!-- dock collapse -->
<path d="M1143.200,27.500l-1.800,1.900l1.800,1.900zM1146.400,27.500l-1.800,1.900l1.800,1.900z" fill="#c8c8c8"/>
<path d="M1475.8,27.6l1.8,1.9l-1.8,1.9zM1478.6,27.6l1.4,1.5v0.8l-1.4,1.5z" fill="#c8c8c8"/>
<g fill="#9c9c9c"><rect x="1474.2" y="41" width="5.8" height="0.9"/><rect x="1474.2" y="42.6" width="5.8" height="0.9"/><rect x="1474.2" y="44.2" width="5.8" height="0.9"/></g>
<g fill="#9c9c9c"><rect x="1107" y="505" width="8" height="1.2"/><rect x="1107" y="507.3" width="8" height="1.2"/><rect x="1107" y="509.6" width="8" height="1.2"/></g>
<!-- icon strip grippers -->
<g fill="#454545">
<path d="M1128.5,37h2v2h-2zM1131.5,37h2v2h-2zM1134.5,37h2v2h-2zM1137.5,37h2v2h-2zM1140.5,37h2v2h-2z"/>
<path d="M1128.5,90.5h2v2h-2zM1131.5,90.5h2v2h-2zM1134.5,90.5h2v2h-2zM1137.5,90.5h2v2h-2zM1140.5,90.5h2v2h-2z"/>
<path d="M1128.5,165.5h2v2h-2zM1131.5,165.5h2v2h-2zM1134.5,165.5h2v2h-2zM1137.5,165.5h2v2h-2zM1140.5,165.5h2v2h-2z"/>
<path d="M1128.5,197.8h2v2h-2zM1131.5,197.8h2v2h-2zM1134.5,197.8h2v2h-2zM1137.5,197.8h2v2h-2zM1140.5,197.8h2v2h-2z"/>
<path d="M1128.5,229h2v2h-2zM1131.5,229h2v2h-2zM1134.5,229h2v2h-2zM1137.5,229h2v2h-2zM1140.5,229h2v2h-2z"/>
</g>
<!-- palette -->
<path d="M1137.2,46.8c4.2,0 6.8,2.4 6.8,5.4c0,3.4 -3.4,5.7 -7.6,5.7c-4,0 -7.1,-1.6 -7.1,-4.2c0,-1.6 1.4,-2.3 2.7,-2.3c1.3,0 1.7,-0.5 1.7,-1.5c0,-1.7 1.3,-3.1 3.5,-3.1z" fill="#d6d6d6"/>
<g fill="#444"><circle cx="1132.6" cy="54.2" r="1.1"/><circle cx="1135.8" cy="55.6" r="1.1"/><circle cx="1139.3" cy="55.1" r="1.1"/><circle cx="1141.6" cy="52.6" r="1.1"/><circle cx="1139.6" cy="49.8" r="1.0"/></g>
<!-- swatches -->
<rect x="1130" y="69.6" width="13" height="8.8" fill="#d0d0d0"/>
<g fill="#4a4a4a"><rect x="1131.2" y="70.8" width="3" height="2.6"/><rect x="1138.8" y="70.8" width="3" height="2.6"/><rect x="1131.2" y="74.6" width="3" height="2.6" fill="#6a6a6a"/><rect x="1135" y="74.6" width="3" height="2.6" fill="#888"/><rect x="1138.8" y="74.6" width="3" height="2.6" fill="#5a5a5a"/><rect x="1135" y="70.8" width="3" height="2.6" fill="#b0b0b0"/></g>
<!-- align -->
<g fill="#d4d4d4"><rect x="1131" y="98.8" width="1.1" height="14.2"/><rect x="1133" y="100.8" width="6" height="4.6"/><rect x="1133" y="106.8" width="10" height="4.6"/></g>
<!-- info -->
<circle cx="1136.8" cy="127.4" r="6.4" fill="#d4d4d4"/>
<g fill="#444"><circle cx="1136.8" cy="123.9" r="1.15"/><path d="M1135.2,125.9h2.6v4.5h1v1.2h-4.2v-1.2h1.1v-3.3h-0.9z"/></g>
<!-- transform -->
<rect x="1132.3" y="144.6" width="9.2" height="9.2" fill="none" stroke="#d0d0d0" stroke-width="1"/>
<g fill="#e0e0e0"><rect x="1130.8" y="143.1" width="2.6" height="2.6"/><rect x="1135.6" y="143.1" width="2.6" height="2.6"/><rect x="1140.4" y="143.1" width="2.6" height="2.6"/><rect x="1130.8" y="147.9" width="2.6" height="2.6"/><rect x="1140.4" y="147.9" width="2.6" height="2.6"/><rect x="1130.8" y="152.7" width="2.6" height="2.6"/><rect x="1135.6" y="152.7" width="2.6" height="2.6"/><rect x="1140.4" y="152.7" width="2.6" height="2.6"/></g>
<rect x="1136.3" y="148.6" width="1.2" height="1.2" fill="#909090"/>
<!-- dots -->
<g fill="#d4d4d4"><circle cx="1132.6" cy="184.9" r="3.3"/><circle cx="1139.1" cy="180.6" r="2.5"/><circle cx="1141.2" cy="174.6" r="1.7"/></g>
<!-- CC -->
<path d="M1133.400,218.300c-3,0 -5.300,-2.300 -5.300,-5.200c0,-2.900 2.300,-5.100 5.200,-5.100c0.500,0 0.900,0 1.300,0.200c1,-0.800 2.600,-1.300 4.300,-1.300c3.600,0 6.200,2.500 6.200,5.700c0,3.200 -2.600,5.700 -6,5.700z" fill="#d6d6d6"/>
<g fill="none" stroke="#5c5c5c" stroke-width="1.100" stroke-linecap="round"><path d="M1136.300,215.900h-2.800c-1.700,0 -3,-1.200 -3,-2.800c0,-1.600 1.300,-2.800 2.900,-2.800c1.100,0 1.900,0.500 2.600,1.300l2.700,3.200"/><path d="M1135.600,209.700c0.900,-0.700 1.900,-1 3.100,-1c2.300,0 3.900,1.600 3.900,3.600c0,2 -1.600,3.600 -3.700,3.600"/></g>
<!-- tools -->
<g stroke="#d8d8d8" fill="none" stroke-linecap="round"><path d="M1131.600,250.200l5.600,-5.600" stroke-width="2.700"/><path d="M1137,244.800l6,-6" stroke-width="1.200"/><path d="M1132.600,241.200l8.600,4.300" stroke-width="1.700"/></g>
<path d="M1129.300,239.200l2.300,0.300l0.900,-1.800c1.500,0.300 2.300,1.500 2.300,2.800c0,1.600 -1.300,2.800 -2.900,2.800c-1.500,0 -2.800,-1.200 -2.800,-2.700c0,-0.500 0.100,-1 0.200,-1.400z" fill="#d8d8d8"/>
<circle cx="1143.100" cy="246.700" r="1.600" fill="#535353" stroke="#d8d8d8" stroke-width="1.200"/>
<!-- eraser tool -->
<path d="M1181.4,56.7l6.3,5.700l-5.900,5.200l-5.700,-5.400z" fill="#cacaca"/>
<path d="M1176.100,62.200l5.700,5.400l-3.400,2.600l-4.600,-4.700z" fill="#3c3c3c" stroke="#cacaca" stroke-width="1.100" stroke-linejoin="round"/>
<!-- section triangle -->
<path d="M1156.800,101.800h6.800l-3.400,4.100z" fill="#dcdcdc"/>
<!-- option icons: eraser mode -->
<circle cx="1218.4" cy="125.6" r="4.900" fill="#8a8a8a" stroke="#d6d6d6" stroke-width="1.700"/>
<path d="M1212.600,125.400h2.600c1,0 1.200,1.100 2.100,1.100c0.900,0 1.100,-1.500 2.200,-1.500c1,0 1.100,0.900 2,0.900h2.700" fill="none" stroke="#111" stroke-width="1.300"/>
<path d="M1226.400,131.200v2.300h-2.300z" fill="#eee"/>
<!-- faucet -->
<g fill="#d8d8d8"><rect x="1247.200" y="118.900" width="4.800" height="1.300"/><rect x="1249.000" y="119.500" width="1.400" height="3"/><path d="M1246.500,122.100h7.700v2.900h-6.200c-0.900,0 -1.300,0.400 -1.300,1.300v1.600h-2.800v-2.200c0,-2.300 1,-3.600 2.600,-3.600z"/><rect x="1243.900" y="128.700" width="2.600" height="2.800" rx="1"/></g>
<!-- target pencil -->
<g fill="none" stroke="#d0d0d0"><circle cx="1278" cy="126.600" r="5.300" stroke-width="1.200"/><circle cx="1278" cy="126.600" r="2.800" stroke-width="1.100"/></g>
<path d="M1278.300,126.300l5.600,-6.100" stroke="#535353" stroke-width="4.600"/>
<path d="M1279.500,125l4.900,-5.300" stroke="#dcdcdc" stroke-width="2.800"/>
<path d="M1277.400,127.200l1.400,-3l1.500,1.500z" fill="#dcdcdc"/>
<!-- pencil arrows -->
<path d="M1305,128.800l8,-8.400" stroke="#dcdcdc" stroke-width="2.900"/>
<path d="M1303,130.900l1.200,-3.300l2,1.900z" fill="#dcdcdc"/>
<g stroke="#d0d0d0" stroke-width="1" fill="#d0d0d0"><path d="M1303.600,120.400l4.600,1.700" fill="none"/><path d="M1302.400,119.600l2.600,-0.300l-1,2.300z"/><path d="M1312.800,124.800v4.800" fill="none"/><circle cx="1312.800" cy="130.200" r="1.100"/><path d="M1311.500,125.800l1.300,-2.200l1.300,2.200z"/></g>
<!-- brush circle -->
<circle cx="1219.900" cy="157.300" r="6.200" fill="url(#bg1)" stroke="#3c3c3c" stroke-width="1.100"/>
<path d="M1229.300,161.400v2.300h-2.300z" fill="#f0f0f0"/>
<!-- new layer (prop) -->
<path d="M1242.400,154h9.600v9.600h-5.600v-4.200h-4z" fill="#d8d8d8" stroke="#3e3e3e" stroke-width="0.600"/>
<path d="M1242.800,159.800h3.200v3.400z" fill="#f4f4f4"/>
<!-- trash dim -->
<g fill="none" stroke="#6c6c6c" stroke-width="1"><path d="M1260.200,156.200h7"/><path d="M1262.200,156v-1.600h3v1.600"/><path d="M1261,157l0.400,6.400h4.600l0.400,-6.400" fill="#626262"/><path d="M1262.700,157.800v4.800M1264.700,157.800v4.800" stroke="#555"/></g>
<!-- pencil dim -->
<path d="M1276.300,161.800l7,-6.500" stroke="#727272" stroke-width="3.200"/>
<path d="M1274.300,163.700l1.200,-3.200l2.100,2z" fill="#727272"/>
<!-- sliders -->
<rect x="1215" y="178.700" width="199.300" height="1.800" fill="#737373"/>
<circle cx="1243.300" cy="179.600" r="5.500" fill="#535353" stroke="#f0f0f0" stroke-width="1.500"/>
<rect x="1221.500" y="197.800" width="192.800" height="1.600" fill="#606060"/>
<circle cx="1215.400" cy="198.600" r="5.400" fill="#535353" stroke="#6c6c6c" stroke-width="1.300"/>
<!-- inputs -->
<rect x="1422.800" y="172.900" width="24" height="12.800" rx="1.500" fill="#424242"/>
<rect x="1421.300" y="192.200" width="25.700" height="13.200" rx="1.500" fill="#575757"/>
<path d="M1454,178.600h8.200M1458.100,174.500v8.300" stroke="#e8e8e8" stroke-width="2"/>
<!-- checkbox -->
<rect x="1210.200" y="213.200" width="9" height="9" rx="1.200" fill="#dcdcdc"/>
<path d="M1212,217.600l2,2.100l3.500,-4.300" fill="none" stroke="#333" stroke-width="1.500"/>
<!-- timeline: new layer -->
<path d="M11,523.800h8.200v8.200h-4.600v-3.800h-3.600z" fill="#cccccc" stroke="#3c3c3c" stroke-width="0.600"/>
<path d="M11.600,528.800h2.600v2.900z" fill="#f0f0f0"/>
<!-- folder -->
<path d="M28,524h4.800l0.800,1.200h3.800v6.800h-9.400z" fill="#c6c6c6" stroke="#3a3a3a" stroke-width="0.600"/>
<!-- trash -->
<g stroke="#8e8e8e" fill="none" stroke-width="1"><path d="M47,525.800h8.200"/><path d="M49.300,525.600v-1.800h3.600v1.800"/><path d="M47.900,526.600l0.500,6.200h5.400l0.500,-6.200" fill="#777"/><path d="M49.800,527.400v4.600M52.300,527.400v4.600" stroke="#5a5a5a"/></g>
<!-- camera -->
<g fill="#d2d2d2"><rect x="113" y="524.800" width="5.400" height="6.200"/><path d="M119.200,527.900l3.700,-2.900v5.800z"/></g>
<!-- hierarchy -->
<g fill="#d2d2d2"><rect x="136.800" y="523.100" width="5.400" height="2.900"/><rect x="139" y="526" width="1" height="2"/><rect x="136.200" y="527.800" width="6.700" height="1"/><rect x="136.200" y="528" width="1" height="2.200"/><rect x="141.900" y="528" width="1" height="2.200"/><rect x="133.900" y="530" width="5" height="3.200"/><rect x="140.200" y="530" width="5" height="3.200"/></g>
<!-- graph -->
<g fill="#d2d2d2"><rect x="155.800" y="524.100" width="1.100" height="9.100"/><rect x="155.800" y="532.100" width="9.300" height="1.100"/><path d="M164.500,527.100l-3.600,0.400l2.500,2.800z"/></g>
<path d="M157.600,531.700l5,-3.300" stroke="#d2d2d2" stroke-width="1.100"/>
<!-- layer header icons -->
<rect x="136.100" y="553.600" width="3.300" height="7.800" rx="1" fill="none" stroke="#1a1a1a" stroke-width="1.100"/>
<path d="M147.800,557.200c2.600,-4.200 7.800,-4.200 10.400,0c-2.600,4.200 -7.800,4.200 -10.400,0z" fill="#dcdcdc"/>
<circle cx="153" cy="557.200" r="2.100" fill="#535353"/><circle cx="153" cy="557.200" r="1" fill="#dcdcdc"/>
<rect x="163.600" y="556.200" width="8.500" height="5.700" rx="0.600" fill="#dcdcdc"/>
<path d="M165.500,556.400v-1.500c0,-3 4.700,-3 4.700,0v1.500" fill="none" stroke="#dcdcdc" stroke-width="1.400"/>
<rect x="167.300" y="557.800" width="1.200" height="2.500" fill="#535353"/>
<!-- layer row icons -->
<path d="M21.400,569.700h8.500v8.500h-5.400l-3.100,-3.100z" fill="none" stroke="#e6e6e6" stroke-width="1"/>
<path d="M21.400,575.100h3.100v3.100" fill="none" stroke="#e6e6e6" stroke-width="1"/>
<rect x="135.600" y="569.800" width="4.300" height="8.300" fill="#00ffff"/>
<circle cx="153.900" cy="574.300" r="1.500" fill="#fff"/><circle cx="168.500" cy="574.300" r="1.500" fill="#fff"/>
<!-- dotted underlines -->
<g stroke="#b8b8b8" stroke-width="0.800" stroke-dasharray="1,1"><path d="M181.800,531.300h3M206.800,531.300h10.400M241,531.300h17.600"/></g>
<!-- separators in toolbar -->
<g fill="#494949"><rect x="279.300" y="516" width="1" height="24"/><rect x="333.600" y="516" width="1" height="24"/><rect x="419.300" y="516" width="1" height="24"/><rect x="457.300" y="516" width="1" height="24"/></g>
<!-- playback -->
<g fill="#cecece">
<path d="M295.900,523v7.900l-5.300,-3.950z"/>
<path d="M319.100,523v7.900l5.200,-3.950z"/>
<rect x="342.900" y="523" width="1.700" height="7.300"/><path d="M352.100,523v7.300l-7,-3.650z"/>
<path d="M364.400,523v7.300l-7.500,-3.650z"/><rect x="365.300" y="523" width="1.700" height="7.300"/>
<path d="M372.300,523v7.300l7.500,-3.650z"/>
<rect x="384.600" y="523" width="1.700" height="7.300"/><path d="M387.700,523v7.300l7.500,-3.650z"/>
<path d="M399.600,523v7.300l7,-3.650z"/><rect x="407.100" y="523" width="1.700" height="7.300"/>
</g>
<!-- frame icon -->
<rect x="304.500" y="521.800" width="5.800" height="10.400" rx="1.200" fill="#444" stroke="#cfcfcf" stroke-width="1"/>
<rect x="307" y="523.400" width="0.800" height="5" fill="#2c2c2c"/>
<circle cx="307.400" cy="529.200" r="1.500" fill="#eee"/>
<!-- center frame -->
<rect x="425.300" y="524.900" width="8.200" height="2.700" rx="0.800" fill="#8c8c8c" stroke="#d4d4d4" stroke-width="0.900"/>
<rect x="429.100" y="522.300" width="0.900" height="7.400" fill="#dcdcdc"/>
<!-- loop -->
<path d="M440,525.800v4.300h8.200v-3" fill="none" stroke="#d4d4d4" stroke-width="1.500"/>
<path d="M441.600,524.600h3.800v-1.700l3.600,2.700l-3.600,2.700v-1.700h-3.800z" fill="#d4d4d4"/>
<!-- onion skins -->
<g fill="none" stroke="#cfcfcf" stroke-width="1">
<rect x="464.500" y="522.800" width="4" height="3.800"/><rect x="467" y="524.900" width="4.400" height="4.400" fill="#b4b4b4"/>
<rect x="478.600" y="522.800" width="4" height="3.800"/><rect x="480.800" y="524.900" width="4.600" height="4.400" fill="#4a4a4a"/>
<rect x="491.800" y="522.800" width="3" height="5.800" rx="0.800"/><rect x="494.600" y="524.600" width="3" height="5.800" rx="0.800" fill="#222"/>
<path d="M507,522.800h-1.500v6.400h1.500M511.400,522.800h1.500v5"/>
</g>
<circle cx="508.800" cy="526.200" r="0.900" fill="#e0e0e0"/>
<path d="M509.600,529h3.400l-1.700,1.900z" fill="#e0e0e0"/>
<!-- undo -->
<path d="M985.900,527.200A3.200,3.200 0 1 1 988.600,530.000" fill="none" stroke="#d8d8d8" stroke-width="1.500"/>
<path d="M983.300,525.600h5l-2.700,3.400z" fill="#d8d8d8"/>
<rect x="984.200" y="530.500" width="8.400" height="1.100" fill="#d8d8d8"/>
<!-- mountains -->
<path d="M1001.700,528.800l2.300,-1.900l1,0.700l1.900,-2.600l2.800,3.800z" fill="#d8d8d8"/>
<path d="M1094.800,528.800l3.600,-3.800l1.500,1.600l-2,2.200z" fill="#d8d8d8"/><path d="M1098.700,528.800l4.600,-5.700l5,5.700z" fill="#d8d8d8"/>
<!-- zoom slider -->
<rect x="1018.200" y="526.200" width="69.500" height="1.800" fill="#7a7a7a"/>
<circle cx="1038.200" cy="527.100" r="3.500" fill="#535353" stroke="#f0f0f0" stroke-width="1.700"/>
</svg>

<span class="t" style="left:6.2px;top:3.65px;font-size:15px;color:#bf4f35;-webkit-text-stroke:0.3px #bf4f35;transform:scaleX(0.9833)">An</span>
<span class="t" style="left:36.19px;top:6.9px;font-size:11px;color:#e2e2e2;transform:scaleX(0.7105)">ファイル(F)</span>
<span class="t" style="left:89.6px;top:7.4px;font-size:11px;color:#e2e2e2;transform:scaleX(0.8917)">編集(E)</span>
<span class="t" style="left:134.1px;top:7.4px;font-size:11px;color:#e2e2e2;transform:scaleX(0.9028)">表示(V)</span>
<span class="t" style="left:180.1px;top:7.4px;font-size:11px;color:#e2e2e2;transform:scaleX(0.9125)">挿入(I)</span>
<span class="t" style="left:221.6px;top:7.4px;font-size:11px;color:#e2e2e2;transform:scaleX(0.9368)">修正(M)</span>
<span class="t" style="left:268.64px;top:6.9px;font-size:11px;color:#e2e2e2;transform:scaleX(0.7589)">テキスト(T)</span>
<span class="t" style="left:323.77px;top:6.9px;font-size:11px;color:#e2e2e2;transform:scaleX(0.7328)">コマンド(C)</span>
<span class="t" style="left:380.2px;top:7.4px;font-size:11px;color:#e2e2e2;transform:scaleX(0.8868)">制御(O)</span>
<span class="t" style="left:425.44px;top:7.4px;font-size:11px;color:#e2e2e2;transform:scaleX(0.7638)">デバッグ(D)</span>
<span class="t" style="left:482.66px;top:7.4px;font-size:11px;color:#e2e2e2;transform:scaleX(0.7352)">ウィンドウ(W)</span>
<span class="t" style="left:546.99px;top:7.4px;font-size:11px;color:#e2e2e2;transform:scaleX(0.8064)">ヘルプ(H)</span>
<span class="t" style="left:1342.7px;top:6.25px;font-size:10.5px;color:#e2e2e2;transform:scaleX(0.9571)">初期設定</span>
<span class="t" style="left:9.3px;top:27.7px;font-size:9.5px;color:#c4c4c4;transform:scaleX(0.9651)">名称未設定 - 2 (Canvas)*</span>
<span class="t" style="left:139.9px;top:28.2px;font-size:9.5px;color:#ffffff;font-weight:700;transform:scaleX(0.9774)">名称未設定 - 4</span>
<span class="t" style="left:47.37px;top:46.15px;font-size:9.5px;color:#e0e0e0;transform:scaleX(0.8286)">シーン 1</span>
<span class="t" style="left:1056.9px;top:44.4px;font-size:9.5px;color:#e8e8e8;transform:scaleX(0.9)">67%</span>
<span class="t" style="left:1158.03px;top:36.55px;font-size:8.5px;color:#ffffff;font-weight:700;transform:scaleX(0.77)">プロパティ</span>
<span class="t" style="left:1199.67px;top:36.55px;font-size:8.5px;color:#c8c8c8;transform:scaleX(0.7325)">ライブラリ</span>
<span class="t" style="left:1209.5px;top:56.45px;font-size:9.5px;color:#d4d4d4;transform:scaleX(0.8061)">消しゴムツール</span>
<span class="t" style="left:1168.6px;top:99.15px;font-size:9.5px;color:#d4d4d4;transform:scaleX(0.76)">消しゴムオプション</span>
<span class="t" style="left:1165.9px;top:150.15px;font-size:9.5px;color:#d0d0d0;transform:scaleX(0.8907)">消しゴム :</span>
<span class="t" style="left:1176.9px;top:175.05px;font-size:9.5px;color:#d0d0d0;transform:scaleX(0.8273)">サイズ :</span>
<span class="t" style="left:1157.3px;top:193.9px;font-size:9.5px;color:#d0d0d0;transform:scaleX(0.9019)">最小サイズ :</span>
<span class="t" style="left:1222.82px;top:213.3px;font-size:9.5px;color:#e6e6e6;transform:scaleX(0.8774)">ステージに合わせてサイズを拡大 / 縮小</span>
<span class="t" style="left:1426.8px;top:175.15px;font-size:9px;color:#ffffff;transform:scaleX(0.94)">29</span>
<span class="t" style="left:1427.8px;top:194.3px;font-size:8.5px;color:#6c6c6c;transform:scaleX(0.52)">1</span>
<span class="t" style="left:6.63px;top:503.8px;font-size:8.5px;color:#ffffff;font-weight:700;transform:scaleX(0.7735)">タイムライン</span>
<span class="t" style="left:55.43px;top:503.8px;font-size:8.5px;color:#c8c8c8;transform:scaleX(1.0687)">出力</span>
<span class="t" style="left:181.0px;top:522.55px;font-size:8px;color:#ffffff;transform:scaleX(0.9)">1</span>
<span class="t" style="left:206.8px;top:522.55px;font-size:8px;color:#ffffff;transform:scaleX(0.9273)">0.0</span>
<span class="t" style="left:218.9px;top:522.95px;font-size:8px;color:#b0b0b0;transform:scaleX(0.675)">s</span>
<span class="t" style="left:241.0px;top:522.55px;font-size:8px;color:#ffffff;transform:scaleX(0.875)">24.00</span>
<span class="t" style="left:260.8px;top:522.7px;font-size:8px;color:#b0b0b0;transform:scaleX(0.8091)">fps</span>
<span class="t" style="left:34.26px;top:568.85px;font-size:9.5px;color:#ffffff;transform:scaleX(0.8196)">レイヤー_1</span>
<span class="t" style="left:178.0px;top:555.5px;font-size:9px;color:#ffffff;transform:scaleX(0.56)">1</span>
<span class="t" style="left:201.4px;top:555.5px;font-size:9px;color:#e0e0e0;transform:scaleX(0.96)">5</span>
<span class="t" style="left:232.38px;top:555.5px;font-size:9px;color:#e0e0e0;transform:scaleX(0.86)">10</span>
<span class="t" style="left:263.35px;top:555.5px;font-size:9px;color:#e0e0e0;transform:scaleX(0.86)">15</span>
<span class="t" style="left:294.33px;top:555.5px;font-size:9px;color:#e0e0e0;transform:scaleX(0.86)">20</span>
<span class="t" style="left:325.3px;top:555.5px;font-size:9px;color:#e0e0e0;transform:scaleX(0.86)">25</span>
<span class="t" style="left:356.28px;top:555.5px;font-size:9px;color:#e0e0e0;transform:scaleX(0.86)">30</span>
<span class="t" style="left:387.25px;top:555.5px;font-size:9px;color:#e0e0e0;transform:scaleX(0.86)">35</span>
<span class="t" style="left:418.22px;top:555.5px;font-size:9px;color:#e0e0e0;transform:scaleX(0.86)">40</span>
<span class="t" style="left:449.2px;top:555.5px;font-size:9px;color:#e0e0e0;transform:scaleX(0.86)">45</span>
<span class="t" style="left:480.18px;top:555.5px;font-size:9px;color:#e0e0e0;transform:scaleX(0.86)">50</span>
<span class="t" style="left:511.15px;top:555.5px;font-size:9px;color:#e0e0e0;transform:scaleX(0.86)">55</span>
<span class="t" style="left:542.12px;top:555.5px;font-size:9px;color:#e0e0e0;transform:scaleX(0.86)">60</span>
<span class="t" style="left:573.1px;top:555.5px;font-size:9px;color:#e0e0e0;transform:scaleX(0.86)">65</span>
<span class="t" style="left:604.08px;top:555.5px;font-size:9px;color:#e0e0e0;transform:scaleX(0.86)">70</span>
<span class="t" style="left:635.05px;top:555.5px;font-size:9px;color:#e0e0e0;transform:scaleX(0.86)">75</span>
<span class="t" style="left:666.02px;top:555.5px;font-size:9px;color:#e0e0e0;transform:scaleX(0.86)">80</span>
<span class="t" style="left:697.0px;top:555.5px;font-size:9px;color:#e0e0e0;transform:scaleX(0.86)">85</span>
<span class="t" style="left:727.98px;top:555.5px;font-size:9px;color:#e0e0e0;transform:scaleX(0.86)">90</span>
<span class="t" style="left:758.95px;top:555.5px;font-size:9px;color:#e0e0e0;transform:scaleX(0.86)">95</span>
<span class="t" style="left:789.92px;top:555.5px;font-size:9px;color:#e0e0e0;transform:scaleX(0.88)">100</span>
<span class="t" style="left:820.9px;top:555.5px;font-size:9px;color:#e0e0e0;transform:scaleX(0.88)">105</span>
<span class="t" style="left:851.88px;top:555.5px;font-size:9px;color:#e0e0e0;transform:scaleX(0.9429)">110</span>
<span class="t" style="left:882.85px;top:555.5px;font-size:9px;color:#e0e0e0;transform:scaleX(0.9429)">115</span>
<span class="t" style="left:913.82px;top:555.5px;font-size:9px;color:#e0e0e0;transform:scaleX(0.88)">120</span>
<span class="t" style="left:944.8px;top:555.5px;font-size:9px;color:#e0e0e0;transform:scaleX(0.88)">125</span>
<span class="t" style="left:975.78px;top:555.5px;font-size:9px;color:#e0e0e0;transform:scaleX(0.88)">130</span>
<span class="t" style="left:1006.75px;top:555.5px;font-size:9px;color:#e0e0e0;transform:scaleX(0.88)">135</span>
<span class="t" style="left:1037.73px;top:555.5px;font-size:9px;color:#e0e0e0;transform:scaleX(0.88)">140</span>
<span class="t" style="left:1068.7px;top:555.5px;font-size:9px;color:#e0e0e0;transform:scaleX(0.88)">145</span>
<span class="t" style="left:1099.8px;top:555.5px;font-size:9px;color:#e0e0e0;transform:scaleX(0.56)">1</span>
<span class="t" style="left:319.97px;top:543.35px;font-size:8.5px;color:#e0e0e0;transform:scaleX(0.8667)">1s</span>
<span class="t" style="left:468.53px;top:543.35px;font-size:8.5px;color:#e0e0e0;transform:scaleX(0.8667)">2s</span>
<span class="t" style="left:617.09px;top:543.35px;font-size:8.5px;color:#e0e0e0;transform:scaleX(0.8667)">3s</span>
<span class="t" style="left:765.65px;top:543.35px;font-size:8.5px;color:#e0e0e0;transform:scaleX(0.8667)">4s</span>
<span class="t" style="left:914.21px;top:543.35px;font-size:8.5px;color:#e0e0e0;transform:scaleX(0.8667)">5s</span>
<span class="t" style="left:1062.77px;top:543.35px;font-size:8.5px;color:#e0e0e0;transform:scaleX(0.8667)">6s</span>

<div class="a" id="topb"></div><div class="a" id="leftb"></div>
</body>
</html>
